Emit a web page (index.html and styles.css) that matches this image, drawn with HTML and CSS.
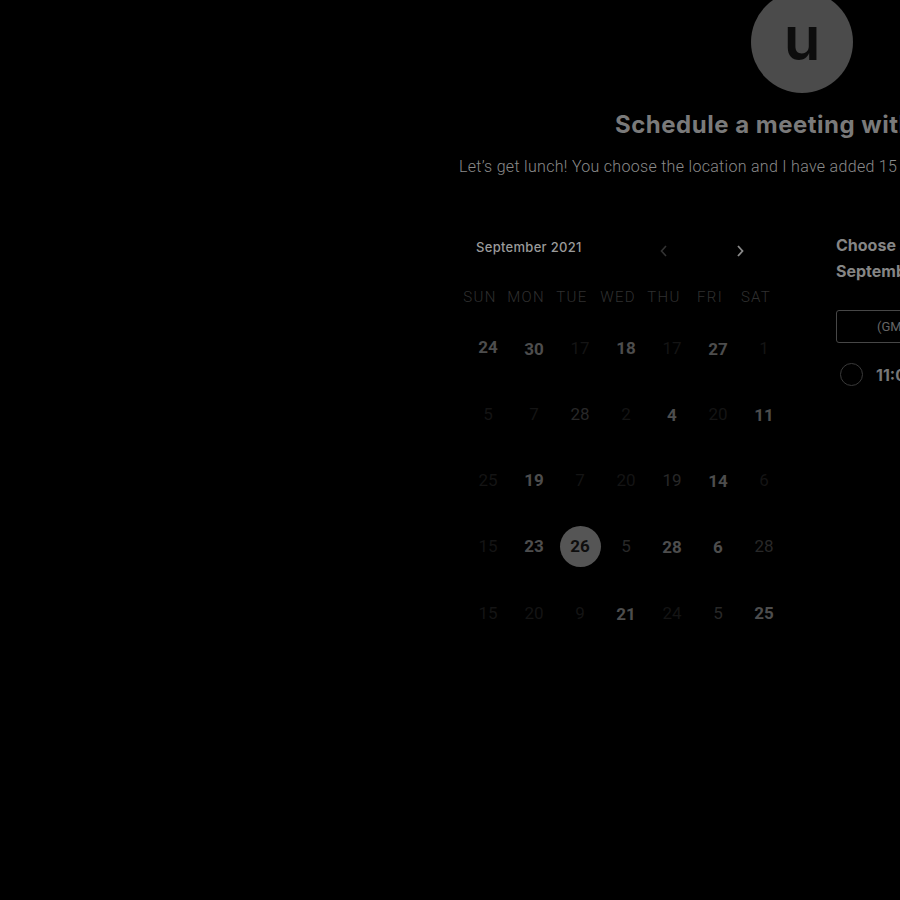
FILE: index.html
```html
<!DOCTYPE html>
<html>
<head>
<meta charset="utf-8">
<link rel="stylesheet" href="styles.css">
</head>
<body>
<div class="page">
  <header class="head">
    <div class="avatar">u</div>
    <h1 class="title">Schedule a meeting with username</h1>
    <p class="desc">Let’s get lunch! You choose the location and I have added 15 minutes of travel time.</p>
  </header>
  <div class="content">
    <section class="calendar">
      <div class="cal-top">
        <span class="month">September 2021</span>
        <span class="nav">
          <svg class="arrow prev" width="10" height="14" viewBox="0 0 10 14"><path d="M7 2 L2.5 7 L7 12" fill="none" stroke="currentColor" stroke-width="1.6"/></svg>
          <svg class="arrow next" width="10" height="14" viewBox="0 0 10 14"><path d="M3 2 L7.5 7 L3 12" fill="none" stroke="currentColor" stroke-width="1.8"/></svg>
        </span>
      </div>
      <div class="weekdays">
        <span>SUN</span><span>MON</span><span>TUE</span><span>WED</span><span>THU</span><span>FRI</span><span>SAT</span>
      </div>
      <div class="days">
        <span class="d on up">24</span><span class="d on down">30</span><span class="d off">17</span><span class="d on">18</span><span class="d off">17</span><span class="d on down">27</span><span class="d off">1</span>
        <span class="d off">5</span><span class="d off">7</span><span class="d dim">28</span><span class="d off">2</span><span class="d on down">4</span><span class="d off">20</span><span class="d on down">11</span>
        <span class="d off">25</span><span class="d on">19</span><span class="d off">7</span><span class="d off">20</span><span class="d dim">19</span><span class="d on down">14</span><span class="d off">6</span>
        <span class="d off">15</span><span class="d on">23</span><span class="d sel"><b>26</b></span><span class="d dim">5</span><span class="d on down">28</span><span class="d on down">6</span><span class="d dim">28</span>
        <span class="d off">15</span><span class="d off">20</span><span class="d off">9</span><span class="d on down">21</span><span class="d off">24</span><span class="d dim">5</span><span class="d on">25</span>
      </div>
    </section>
    <aside class="slots">
      <h2 class="slots-title">Choose a time for Tuesday, September 26</h2>
      <div class="tz">(GMT-07:00) Pacific Time</div>
      <label class="slot"><span class="radio"></span><span class="time">11:00 AM</span></label>
    </aside>
  </div>
</div>
</body>
</html>
```
FILE: styles.css
```css
html, body {
  margin: 0;
  padding: 0;
  background: #000;
  overflow: hidden;
  width: 900px;
  height: 900px;
}
body {
  font-family: Roboto, "Liberation Sans", sans-serif;
  color: #888;
}
.page {
  width: 686px;
  margin-left: 459px;
}
.head {
  display: flex;
  flex-direction: column;
  align-items: flex-start;
  white-space: nowrap;
}
.avatar {
  width: 102px;
  height: 102px;
  margin-left: 292px;
  border-radius: 50%;
  background: #4b4b4b;
  color: #0d0d0d;
  margin-top: -9px;
  display: flex;
  align-items: center;
  justify-content: center;
  font-family: Inter, "Noto Sans", sans-serif;
  font-weight: 600;
  font-size: 60px;
  line-height: 1;
  padding-bottom: 8px;
  box-sizing: border-box;
}
.title {
  margin: 17px 0 0 156px;
  font-family: Inter, "Noto Sans", sans-serif;
  font-weight: 700;
  font-size: 24px;
  line-height: 30px;
  color: #7a7a7a;
  letter-spacing: 0.5px;
}
.desc {
  margin: 17px 0 0;
  font-weight: 300;
  font-size: 16px;
  line-height: 20px;
  letter-spacing: 0.3px;
  color: #8a8a8a;
}
.content {
  display: flex;
  margin-top: 57px;
}
.calendar {
  width: 330px;
  flex: none;
}
.cal-top {
  display: flex;
  align-items: center;
  height: 26px;
  padding-left: 17px;
}
.month {
  font-family: Inter, "Noto Sans", sans-serif;
  font-size: 13px;
  font-weight: 500;
  letter-spacing: 0.3px;
  color: #9a9a9a;
  width: 183px;
}
.nav {
  display: flex;
  align-items: center;
  gap: 66px;
  padding-top: 8px;
}
.arrow { display: block; }
.prev { color: #333; }
.next { color: #8a8a8a; }
.weekdays {
  display: grid;
  grid-template-columns: repeat(7, 46px);
  margin-left: -2px;
  margin-top: 27px;
  font-size: 15px;
  font-weight: 300;
  letter-spacing: 1.3px;
  color: #303030;
  text-align: center;
  line-height: 20px;
}
.days {
  display: grid;
  grid-template-columns: repeat(7, 46px);
  grid-auto-rows: 66.3px;
  margin-left: 6px;
  margin-top: 20px;
  text-align: center;
  font-size: 17px;
}
.d {
  display: flex;
  align-items: center;
  justify-content: center;
  height: 41px;
}
.on { color: #4d4d4d; font-weight: 700; }
.off { color: #141414; font-weight: 400; }
.dim { color: #282828; font-weight: 400; }
.up { position: relative; top: -1px; }
.down { position: relative; top: 1px; }
.sel b {
  width: 41px;
  height: 41px;
  border-radius: 50%;
  background: #555;
  color: #0e0e0e;
  display: flex;
  align-items: center;
  justify-content: center;
  font-weight: 700;
}
.slots {
  margin-left: 47px;
  width: 300px;
  flex: none;
}
.slots-title {
  margin: -2px 0 0;
  font-family: Inter, "Noto Sans", sans-serif;
  font-weight: 700;
  font-size: 16px;
  line-height: 26px;
  color: #858585;
  width: 240px;
}
.tz {
  margin-top: 26px;
  height: 33px;
  box-sizing: border-box;
  border: 1px solid #474747;
  border-radius: 3px;
  padding-left: 40px;
  font-size: 13px;
  line-height: 31px;
  color: #666;
  white-space: nowrap;
}
.slot {
  display: flex;
  align-items: center;
  margin-top: 20px;
  gap: 13px;
  padding-left: 4px;
}
.radio {
  width: 21px;
  height: 21px;
  border: 1.5px solid #3a3a3a;
  border-radius: 50%;
}
.time {
  font-family: Inter, "Noto Sans", sans-serif;
  font-weight: 700;
  font-size: 16px;
  color: #777;
}
```
